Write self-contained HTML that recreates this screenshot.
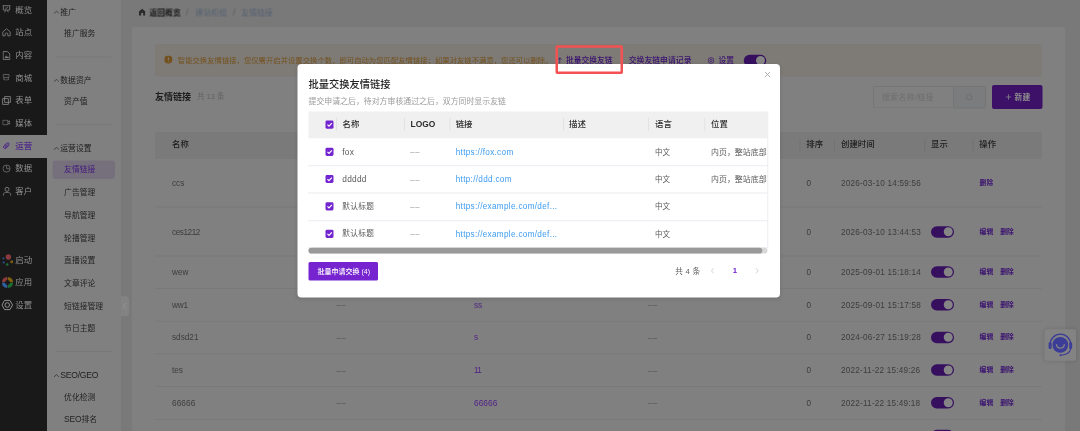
<!DOCTYPE html>
<html lang="zh-CN">
<head>
<meta charset="utf-8">
<title>友情链接</title>
<style>
*{box-sizing:border-box;margin:0;padding:0}
html,body{width:1080px;height:431px;overflow:hidden;background:#797979}
#stage{position:absolute;left:0;top:0;width:4320px;height:1724px;transform:scale(0.25) rotateX(0.0001deg);transform-origin:0 0}
body{position:relative;font-family:"Liberation Sans","Noto Sans CJK SC",sans-serif;font-size:32px;color:#333}
.abs{position:absolute}
.t{position:absolute;white-space:nowrap;line-height:48px;height:48px}
#nav1{position:absolute;left:0;top:0;width:188px;height:1724px;background:#191919}
#nav1 .on{position:absolute;left:0;top:540px;width:188px;height:92px;background:#808080}
#nav2{position:absolute;left:188px;top:0;width:296px;height:1724px;background:#808080}
.hr{position:absolute;left:221.6px;width:225.6px;height:4px;background:#77787b}
#card{position:absolute;left:527.2px;top:108px;width:3733.6px;height:1680px;background:#808080;border-radius:8px 8px 0 0}
#alert{position:absolute;left:620px;top:176px;width:3548px;height:130px;background:#7e7b76;border-radius:8px}
#thead{position:absolute;left:620px;top:528px;width:3548px;height:108px;background:#7a7a7b}
.sep{position:absolute;top:556px;width:4px;height:52px;background:#737373}
.row{position:absolute;left:620px;width:3548px;height:4px;background:#797979}
.sw{position:absolute;width:92px;height:46px;border-radius:24px;background:#36105f}
.sw i{position:absolute;right:4.8px;top:4.8px;width:36px;height:36px;border-radius:20px;background:#858585}
#modal{position:absolute;left:1189.6px;top:256px;width:1930.4px;height:933.6px;background:#fff;border-radius:16px;box-shadow:0 4px 16px rgba(0,0,0,.12)}
#mhead{position:absolute;left:1234px;top:446.4px;width:1838px;height:106.4px;background:#f0f0f0}
.msep{position:absolute;top:472px;width:4px;height:52px;background:#e2e2e2}
.mrow{position:absolute;left:1232px;width:1840px;height:4px;background:#ebebf2}
.cb{position:absolute;left:1301.6px;width:32.8px;height:32.8px;border-radius:5.6px;background:#7326d0}
.cb svg{position:absolute;left:0;top:0;width:32.8px;height:32.8px;display:block}
</style>
</head>
<body><div id="stage">

<div id="nav1"><div class="on"></div></div>
<div class="t" style="left:61.2px;top:15.2px;font-size:33.6px;color:#909090;font-weight:normal;">概览</div>
<div class="t" style="left:61.2px;top:105.6px;font-size:33.6px;color:#909090;font-weight:normal;">站点</div>
<div class="t" style="left:61.2px;top:196.4px;font-size:33.6px;color:#909090;font-weight:normal;">内容</div>
<div class="t" style="left:61.2px;top:287.2px;font-size:33.6px;color:#909090;font-weight:normal;">商城</div>
<div class="t" style="left:61.2px;top:378px;font-size:33.6px;color:#909090;font-weight:normal;">表单</div>
<div class="t" style="left:61.2px;top:468.8px;font-size:33.6px;color:#909090;font-weight:normal;">媒体</div>
<div class="t" style="left:61.2px;top:559.6px;font-size:33.6px;color:#4b258a;font-weight:500;">运营</div>
<div class="t" style="left:61.2px;top:650.4px;font-size:33.6px;color:#909090;font-weight:normal;">数据</div>
<div class="t" style="left:61.2px;top:741.2px;font-size:33.6px;color:#909090;font-weight:normal;">客户</div>
<div class="t" style="left:61.2px;top:1014.8px;font-size:33.6px;color:#909090;font-weight:normal;">启动</div>
<div class="t" style="left:61.2px;top:1106px;font-size:33.6px;color:#909090;font-weight:normal;">应用</div>
<div class="t" style="left:61.2px;top:1196.8px;font-size:33.6px;color:#909090;font-weight:normal;">设置</div>
<svg class="abs" style="left:8px;top:20px;width:36px;height:32px" viewBox="0 0 9 8" fill="none"><path d="M0.6 0.7H8.4M1.3 0.7V5H7.7V0.7M3.1 2.8L4 3.6L5.9 1.9M2.7 7.3L3.5 5.2M6.3 7.3L5.5 5.2" stroke="#808080" stroke-width="0.85"/></svg>
<svg class="abs" style="left:8px;top:112px;width:36px;height:36px" viewBox="0 0 9 9" fill="none"><path d="M0.8 3.9L4.5 0.8L8.2 3.9V7.8H5.8V5.4Q4.5 4.4 3.2 5.4V7.8H0.8Z" stroke="#808080" stroke-width="0.85" stroke-linejoin="round"/></svg>
<svg class="abs" style="left:10px;top:204px;width:32px;height:36px" viewBox="0 0 8 9" fill="none"><path d="M0.6 0.6H5L7.4 3V8.4H0.6Z" stroke="#808080" stroke-width="0.9"/><path d="M2 7L3.5 4.6L4.7 6L5.6 5.2L6.4 7Z" fill="#808080"/></svg>
<svg class="abs" style="left:10.4px;top:296px;width:28.8px;height:26.4px" viewBox="0 0 7.2 6.6" fill="none"><path d="M0.6 0.6H6.6V3.2Q5.6 4.2 4.6 3.3Q3.6 4.2 2.6 3.3Q1.6 4.2 0.6 3.2ZM1.4 3.8V6H5.8V3.8" stroke="#727272" stroke-width="0.8"/></svg>
<svg class="abs" style="left:8px;top:384px;width:36px;height:36px" viewBox="0 0 9 9" fill="none"><path d="M2.6 0.6H8.4V6.4H2.6ZM0.6 2.6H6.4V8.4H0.6Z" stroke="#808080" stroke-width="0.9"/></svg>
<svg class="abs" style="left:9.2px;top:478.4px;width:32px;height:24px" viewBox="0 0 8 6" fill="none"><path d="M0.6 0.7H5.6V5.3H0.6ZM5.6 2.3L7.4 1.4V4.6L5.6 3.7" stroke="#747474" stroke-width="0.8" stroke-linejoin="round"/></svg>
<svg class="abs" style="left:12px;top:569.2px;width:27.2px;height:27.2px" viewBox="0 0 7.4 7.6" fill="none"><path d="M6.6 3.4L3.6 6.4C2.8 7.2 1.6 7.2 0.9 6.5C0.2 5.8 0.3 4.7 1 4L4.4 0.9C5 0.4 5.9 0.4 6.4 0.9C6.9 1.5 6.9 2.3 6.4 2.8L3.3 5.7C3 6 2.5 6 2.2 5.7C1.9 5.4 2 5 2.2 4.7L4.9 2.2" stroke="#4b258a" stroke-width="1.1"/></svg>
<svg class="abs" style="left:8.8px;top:657.2px;width:34.4px;height:34.4px" viewBox="0 0 8.6 8.6" fill="none"><circle cx="4.3" cy="4.3" r="3.6" stroke="#727272" stroke-width="0.8"/><path d="M4.3 1V4.5H7.6" stroke="#727272" stroke-width="0.8"/></svg>
<svg class="abs" style="left:10px;top:746px;width:36px;height:40px" viewBox="0 0 9 10" fill="none"><circle cx="4.5" cy="2.8" r="2" stroke="#808080" stroke-width="0.9"/><path d="M0.8 9.2V8.2C0.8 6.6 2.2 5.8 4.5 5.8C6.8 5.8 8.2 6.6 8.2 8.2V9.2" stroke="#808080" stroke-width="0.9"/></svg>
<svg class="abs" style="left:4px;top:1012px;width:52px;height:56px" viewBox="0 0 13 14" fill="none"><circle cx="7.4" cy="4" r="2.7" fill="#8a3a3e"/><circle cx="10.7" cy="8.7" r="1.5" fill="#7a5a10"/><circle cx="6.2" cy="11.5" r="1.3" fill="#1f6e33"/><circle cx="2.4" cy="5.4" r="0.9" fill="#2a5b9a"/><circle cx="2.7" cy="9.5" r="1" fill="#2a5b9a"/></svg>
<svg class="abs" style="left:6px;top:1106px;width:48px;height:48px" viewBox="0 0 12 12" fill="none"><g transform="translate(6 6)"><path d="M-5.6 -0.3A5.6 5.6 0 0 1 -0.3 -5.6L-0.3 -2.5A2.5 2.5 0 0 0 -2.5 -0.3Z" fill="#8c3a3a"/><path d="M0.3 -5.6A5.6 5.6 0 0 1 5.6 -0.3L2.5 -0.3A2.5 2.5 0 0 0 0.3 -2.5Z" fill="#80600f"/><path d="M5.6 0.3A5.6 5.6 0 0 1 0.3 5.6L0.3 2.5A2.5 2.5 0 0 0 2.5 0.3Z" fill="#1e6b30"/><path d="M-0.3 5.6A5.6 5.6 0 0 1 -5.6 0.3L-2.5 0.3A2.5 2.5 0 0 0 -0.3 2.5Z" fill="#2b5fa0"/></g></svg>
<svg class="abs" style="left:5.2px;top:1196px;width:48px;height:48px" viewBox="0 0 12 12" fill="none"><path d="M0.7 6L3.3 1.4H8.7L11.3 6L8.7 10.6H3.3Z" stroke="#909090" stroke-width="1" stroke-linejoin="round"/><circle cx="6" cy="6" r="2.3" stroke="#909090" stroke-width="1"/></svg>
<div id="nav2"></div>
<svg class="abs" style="left:214.4px;top:40.8px;width:24px;height:16px" viewBox="0 0 6 4" fill="none"><path d="M0.6 3.2L3 0.8L5.4 3.2" stroke="#2e2e2e" stroke-width="0.75"/></svg>
<div class="t" style="left:241.2px;top:23.6px;font-size:31.2px;color:#202020;font-weight:normal;">推广</div>
<svg class="abs" style="left:214.4px;top:314px;width:24px;height:16px" viewBox="0 0 6 4" fill="none"><path d="M0.6 3.2L3 0.8L5.4 3.2" stroke="#2e2e2e" stroke-width="0.75"/></svg>
<div class="t" style="left:241.2px;top:296.8px;font-size:31.2px;color:#202020;font-weight:normal;">数据资产</div>
<svg class="abs" style="left:214.4px;top:586px;width:24px;height:16px" viewBox="0 0 6 4" fill="none"><path d="M0.6 3.2L3 0.8L5.4 3.2" stroke="#2e2e2e" stroke-width="0.75"/></svg>
<div class="t" style="left:241.2px;top:568.8px;font-size:31.2px;color:#202020;font-weight:normal;">运营设置</div>
<svg class="abs" style="left:214.4px;top:1494.8px;width:24px;height:16px" viewBox="0 0 6 4" fill="none"><path d="M0.6 3.2L3 0.8L5.4 3.2" stroke="#2e2e2e" stroke-width="0.75"/></svg>
<div class="t" style="left:241.2px;top:1473.6px;font-size:31.2px;color:#202020;font-weight:normal;"><span style="font-size:34.4px;letter-spacing:-1px">SEO/GEO</span></div>
<div class="abs" style="left:210px;top:642px;width:250px;height:74px;background:#76707d;border-radius:12px"></div>
<div class="t" style="left:256.4px;top:653.2px;font-size:31.2px;color:#43197c;font-weight:normal;">友情链接</div>
<div class="t" style="left:256.4px;top:109.2px;font-size:31.2px;color:#1f1f1f;font-weight:normal;">推广服务</div>
<div class="t" style="left:256.4px;top:382px;font-size:31.2px;color:#1f1f1f;font-weight:normal;">资产值</div>
<div class="t" style="left:256.4px;top:746.8px;font-size:31.2px;color:#1f1f1f;font-weight:normal;">广告管理</div>
<div class="t" style="left:256.4px;top:837.6px;font-size:31.2px;color:#1f1f1f;font-weight:normal;">导航管理</div>
<div class="t" style="left:256.4px;top:928.4px;font-size:31.2px;color:#1f1f1f;font-weight:normal;">轮播管理</div>
<div class="t" style="left:256.4px;top:1019.2px;font-size:31.2px;color:#1f1f1f;font-weight:normal;">直播设置</div>
<div class="t" style="left:256.4px;top:1110px;font-size:31.2px;color:#1f1f1f;font-weight:normal;">文章评论</div>
<div class="t" style="left:256.4px;top:1200.8px;font-size:31.2px;color:#1f1f1f;font-weight:normal;">短链接管理</div>
<div class="t" style="left:256.4px;top:1291.2px;font-size:31.2px;color:#1f1f1f;font-weight:normal;">节日主题</div>
<div class="t" style="left:256.4px;top:1565.2px;font-size:31.2px;color:#1f1f1f;font-weight:normal;">优化检测</div>
<div class="t" style="left:256.4px;top:1653.2px;font-size:31.2px;color:#1f1f1f;font-weight:normal;"><span style="font-size:34px;letter-spacing:-0.8px">SEO</span>排名</div>
<div class="hr" style="top:226px"></div>
<div class="hr" style="top:496px"></div>
<div class="hr" style="top:1404px"></div>
<div class="abs" style="left:484px;top:1185.2px;width:32px;height:78.4px;background:#838383;border-radius:0 12px 12px 0"></div>
<svg class="abs" style="left:490px;top:1210px;width:16px;height:28px" viewBox="0 0 4 7" fill="none"><path d="M3.2 0.6L0.8 3.5L3.2 6.4" stroke="#9c9c9c" stroke-width="0.7"/></svg>
<svg class="abs" style="left:554.8px;top:34.4px;width:27.2px;height:29.6px" viewBox="0 0 6.8 7.4" fill="none"><path d="M3.4 0.3L6.6 3.1V6.6Q6.6 7.1 6.1 7.1H4.4V4.6H2.4V7.1H0.7Q0.2 7.1 0.2 6.6V3.1Z" fill="#2b2b2b"/></svg>
<div class="t" style="left:598px;top:26px;font-size:31.2px;color:#1a1a1a;font-weight:bold;">返回概览</div>
<div class="t" style="left:743.2px;top:25.6px;font-size:38.4px;color:#5e5e5e;font-weight:normal;">/</div>
<div class="t" style="left:782.4px;top:26px;font-size:31.2px;color:#566272;font-weight:normal;">建站柜组</div>
<div class="t" style="left:931.2px;top:25.6px;font-size:38.4px;color:#5e5e5e;font-weight:normal;">/</div>
<div class="t" style="left:965.6px;top:26px;font-size:31.2px;color:#566272;font-weight:normal;">友情链接</div>
<div id="card"></div><div id="alert"></div>
<svg class="abs" style="left:656.8px;top:222.4px;width:32.8px;height:32.8px" viewBox="0 0 8.2 8.2" fill="none"><circle cx="4.1" cy="4.1" r="4.1" fill="#73511d"/><rect x="3.6" y="1.8" width="1" height="3" rx="0.4" fill="#86827c"/><rect x="3.6" y="5.5" width="1" height="1" rx="0.4" fill="#86827c"/></svg>
<div class="t" style="left:711.2px;top:218.8px;font-size:29.4px;color:#74511e;font-weight:normal;">智能交换友情链接，您仅需开启并设置交换个数，即可自动为您匹配友情链接；如果对友链不满意，您还可以删除。</div>
<svg class="abs" style="left:2228.8px;top:228px;width:20px;height:28px" viewBox="0 0 5 7" fill="none"><path d="M2.5 6.5V0.8M0.6 2.8L2.5 0.8L4.4 2.8" stroke="#3b1270" stroke-width="0.7"/></svg>
<div class="t" style="left:2264px;top:218px;font-size:31px;color:#3a1170;font-weight:500;">批量交换友链</div>
<div class="t" style="left:2514.8px;top:218px;font-size:31.4px;color:#3a1170;font-weight:500;">交换友链申请记录</div>
<svg class="abs" style="left:2830px;top:228px;width:28px;height:28px" viewBox="0 0 7 7" fill="none"><circle cx="3.5" cy="3.5" r="2.9" stroke="#3a1170" stroke-width="0.7"/><circle cx="3.5" cy="3.5" r="1.2" stroke="#3a1170" stroke-width="0.7"/></svg>
<div class="t" style="left:2874.4px;top:218px;font-size:31px;color:#3a1170;font-weight:500;">设置</div>
<div class="sw" style="left:2974.8px;top:219.2px;width:90.4px;height:46.4px"><i></i></div>
<div class="t" style="left:620px;top:362px;font-size:36px;color:#1c1c1c;font-weight:bold;">友情链接</div>
<div class="t" style="left:788px;top:361.6px;font-size:30px;color:#626262;font-weight:normal;">共 13 条</div>
<div class="abs" style="left:3492px;top:344px;width:324px;height:90px;border:4px solid #767676;border-right:none;border-radius:8px 0 0 8px"></div>
<div class="t" style="left:3528px;top:364.8px;font-size:31.2px;color:#6d6d6d;font-weight:normal;letter-spacing:1.8px;">搜索名称/链接</div>
<div class="abs" style="left:3812px;top:344px;width:132px;height:90px;border:4px solid #757575;background:#7b7c7d;border-radius:0 8px 8px 0"></div>
<svg class="abs" style="left:3862px;top:374px;width:32px;height:32px" viewBox="0 0 8 8" fill="none"><circle cx="3.6" cy="3.6" r="2.7" stroke="#6a6a6a" stroke-width="0.7"/><path d="M5.6 5.6L6.6 6.6" stroke="#6a6a6a" stroke-width="0.7"/></svg>
<div class="abs" style="left:3968px;top:340px;width:202px;height:96px;background:#3c1167;border-radius:8px"></div>
<svg class="abs" style="left:4022px;top:376px;width:24px;height:24px" viewBox="0 0 6 6" fill="none"><path d="M3 0.3V5.7M0.3 3H5.7" stroke="#8e8e8e" stroke-width="0.7"/></svg>
<div class="t" style="left:4058.4px;top:364.4px;font-size:31.2px;color:#8e8e8e;font-weight:bold;">新建</div>
<div id="thead"></div>
<div class="t" style="left:688px;top:553.2px;font-size:33.6px;color:#1d1d1d;font-weight:500;">名称</div>
<div class="t" style="left:3225.2px;top:553.2px;font-size:33.6px;color:#1d1d1d;font-weight:500;">排序</div>
<div class="t" style="left:3364px;top:553.2px;font-size:33.6px;color:#1d1d1d;font-weight:500;">创建时间</div>
<div class="t" style="left:3724px;top:553.2px;font-size:33.6px;color:#1d1d1d;font-weight:500;">显示</div>
<div class="t" style="left:3917.2px;top:553.2px;font-size:33.6px;color:#1d1d1d;font-weight:500;">操作</div>
<div class="sep" style="left:3198px"></div>
<div class="sep" style="left:3336px"></div>
<div class="sep" style="left:3697.2px"></div>
<div class="sep" style="left:3890px"></div>
<div class="row" style="top:826px"></div>
<div class="row" style="top:1022px"></div>
<div class="row" style="top:1152px"></div>
<div class="row" style="top:1282.8px"></div>
<div class="row" style="top:1413.2px"></div>
<div class="row" style="top:1544px"></div>
<div class="row" style="top:1676px"></div>
<div class="row" style="top:1804px"></div>
<div class="t" style="left:688px;top:708px;font-size:32.8px;color:#3c3c3c;font-weight:normal;letter-spacing:0px;">ccs</div>
<div class="t" style="left:1346px;top:706.8px;font-size:30.4px;color:#4a4a4a;font-weight:normal;letter-spacing:3.2px;">––</div>
<div class="t" style="left:2592px;top:706.8px;font-size:30.4px;color:#4a4a4a;font-weight:normal;letter-spacing:3.2px;">––</div>
<div class="t" style="left:3226.4px;top:708px;font-size:32.8px;color:#3c3c3c;font-weight:normal;">0</div>
<div class="t" style="left:3364px;top:708px;font-size:32.8px;color:#3c3c3c;font-weight:normal;letter-spacing:0.8px;">2026-03-10 14:59:56</div>
<div class="t" style="left:3918.4px;top:706.4px;font-size:27.2px;color:#3a1170;font-weight:bold;">删除</div>
<div class="t" style="left:688px;top:903.6px;font-size:32.8px;color:#3c3c3c;font-weight:normal;letter-spacing:-1.8px;">ces1212</div>
<div class="t" style="left:1346px;top:902.4px;font-size:30.4px;color:#4a4a4a;font-weight:normal;letter-spacing:3.2px;">––</div>
<div class="t" style="left:2592px;top:902.4px;font-size:30.4px;color:#4a4a4a;font-weight:normal;letter-spacing:3.2px;">––</div>
<div class="t" style="left:3226.4px;top:903.6px;font-size:32.8px;color:#3c3c3c;font-weight:normal;">0</div>
<div class="t" style="left:3364px;top:903.6px;font-size:32.8px;color:#3c3c3c;font-weight:normal;letter-spacing:0.8px;">2026-03-10 13:44:53</div>
<div class="sw" style="left:3724px;top:904.6px"><i></i></div>
<div class="t" style="left:3918.4px;top:902px;font-size:27.2px;color:#3a1170;font-weight:bold;">编辑</div>
<div class="t" style="left:4000.8px;top:902px;font-size:27.2px;color:#3a1170;font-weight:bold;">删除</div>
<div class="t" style="left:688px;top:1064px;font-size:32.8px;color:#3c3c3c;font-weight:normal;letter-spacing:0px;">wew</div>
<div class="t" style="left:1346px;top:1062.8px;font-size:30.4px;color:#4a4a4a;font-weight:normal;letter-spacing:3.2px;">––</div>
<div class="t" style="left:2592px;top:1062.8px;font-size:30.4px;color:#4a4a4a;font-weight:normal;letter-spacing:3.2px;">––</div>
<div class="t" style="left:3226.4px;top:1064px;font-size:32.8px;color:#3c3c3c;font-weight:normal;">0</div>
<div class="t" style="left:3364px;top:1064px;font-size:32.8px;color:#3c3c3c;font-weight:normal;letter-spacing:0.8px;">2025-09-01 15:18:14</div>
<div class="sw" style="left:3724px;top:1065px"><i></i></div>
<div class="t" style="left:3918.4px;top:1062.4px;font-size:27.2px;color:#3a1170;font-weight:bold;">编辑</div>
<div class="t" style="left:4000.8px;top:1062.4px;font-size:27.2px;color:#3a1170;font-weight:bold;">删除</div>
<div class="t" style="left:688px;top:1194.8px;font-size:32.8px;color:#3c3c3c;font-weight:normal;letter-spacing:-0.8px;">ww1</div>
<div class="t" style="left:1346px;top:1193.6px;font-size:30.4px;color:#4a4a4a;font-weight:normal;letter-spacing:3.2px;">––</div>
<div class="t" style="left:1896px;top:1194.8px;font-size:32.8px;color:#4f1f86;font-weight:normal;letter-spacing:0px;">ss</div>
<div class="t" style="left:2592px;top:1193.6px;font-size:30.4px;color:#4a4a4a;font-weight:normal;letter-spacing:3.2px;">––</div>
<div class="t" style="left:3226.4px;top:1194.8px;font-size:32.8px;color:#3c3c3c;font-weight:normal;">0</div>
<div class="t" style="left:3364px;top:1194.8px;font-size:32.8px;color:#3c3c3c;font-weight:normal;letter-spacing:0.8px;">2025-09-01 15:17:58</div>
<div class="sw" style="left:3724px;top:1195.8px"><i></i></div>
<div class="t" style="left:3918.4px;top:1193.2px;font-size:27.2px;color:#3a1170;font-weight:bold;">编辑</div>
<div class="t" style="left:4000.8px;top:1193.2px;font-size:27.2px;color:#3a1170;font-weight:bold;">删除</div>
<div class="t" style="left:688px;top:1325.6px;font-size:32.8px;color:#3c3c3c;font-weight:normal;letter-spacing:0px;">sdsd21</div>
<div class="t" style="left:1346px;top:1324.4px;font-size:30.4px;color:#4a4a4a;font-weight:normal;letter-spacing:3.2px;">––</div>
<div class="t" style="left:1896px;top:1325.6px;font-size:32.8px;color:#4f1f86;font-weight:normal;letter-spacing:0px;">s</div>
<div class="t" style="left:2592px;top:1324.4px;font-size:30.4px;color:#4a4a4a;font-weight:normal;letter-spacing:3.2px;">––</div>
<div class="t" style="left:3226.4px;top:1325.6px;font-size:32.8px;color:#3c3c3c;font-weight:normal;">0</div>
<div class="t" style="left:3364px;top:1325.6px;font-size:32.8px;color:#3c3c3c;font-weight:normal;letter-spacing:0.8px;">2024-06-27 15:19:28</div>
<div class="sw" style="left:3724px;top:1326.6px"><i></i></div>
<div class="t" style="left:3918.4px;top:1324px;font-size:27.2px;color:#3a1170;font-weight:bold;">编辑</div>
<div class="t" style="left:4000.8px;top:1324px;font-size:27.2px;color:#3a1170;font-weight:bold;">删除</div>
<div class="t" style="left:688px;top:1456.4px;font-size:32.8px;color:#3c3c3c;font-weight:normal;letter-spacing:0px;">tes</div>
<div class="t" style="left:1346px;top:1455.2px;font-size:30.4px;color:#4a4a4a;font-weight:normal;letter-spacing:3.2px;">––</div>
<div class="t" style="left:1896px;top:1456.4px;font-size:32.8px;color:#4f1f86;font-weight:normal;letter-spacing:-2.8px;">11</div>
<div class="t" style="left:2592px;top:1455.2px;font-size:30.4px;color:#4a4a4a;font-weight:normal;letter-spacing:3.2px;">––</div>
<div class="t" style="left:3226.4px;top:1456.4px;font-size:32.8px;color:#3c3c3c;font-weight:normal;">0</div>
<div class="t" style="left:3364px;top:1456.4px;font-size:32.8px;color:#3c3c3c;font-weight:normal;letter-spacing:0.8px;">2022-11-22 15:49:26</div>
<div class="sw" style="left:3724px;top:1457.4px"><i></i></div>
<div class="t" style="left:3918.4px;top:1454.8px;font-size:27.2px;color:#3a1170;font-weight:bold;">编辑</div>
<div class="t" style="left:4000.8px;top:1454.8px;font-size:27.2px;color:#3a1170;font-weight:bold;">删除</div>
<div class="t" style="left:688px;top:1587.2px;font-size:33.2px;color:#3c3c3c;font-weight:normal;letter-spacing:0.2px;">66666</div>
<div class="t" style="left:1346px;top:1586px;font-size:30.4px;color:#4a4a4a;font-weight:normal;letter-spacing:3.2px;">––</div>
<div class="t" style="left:1896px;top:1587.2px;font-size:33.2px;color:#4f1f86;font-weight:normal;letter-spacing:0.2px;">66666</div>
<div class="t" style="left:2592px;top:1586px;font-size:30.4px;color:#4a4a4a;font-weight:normal;letter-spacing:3.2px;">––</div>
<div class="t" style="left:3226.4px;top:1587.2px;font-size:32.8px;color:#3c3c3c;font-weight:normal;">0</div>
<div class="t" style="left:3364px;top:1587.2px;font-size:32.8px;color:#3c3c3c;font-weight:normal;letter-spacing:0.8px;">2022-11-22 15:49:18</div>
<div class="sw" style="left:3724px;top:1588.2px"><i></i></div>
<div class="t" style="left:3918.4px;top:1585.6px;font-size:27.2px;color:#3a1170;font-weight:bold;">编辑</div>
<div class="t" style="left:4000.8px;top:1585.6px;font-size:27.2px;color:#3a1170;font-weight:bold;">删除</div>
<div class="sw" style="left:3724px;top:1719.2px"><i></i></div>
<div class="abs" style="left:4177.6px;top:1316.8px;width:126.4px;height:126.4px;background:#838384;border-radius:10px;box-shadow:0 0 16px rgba(0,0,0,.14)"></div>
<svg class="abs" style="left:4177.6px;top:1316.8px;width:126.4px;height:126.4px" viewBox="0 0 31.6 31.6" fill="none"><circle cx="15.8" cy="15.6" r="7.9" fill="#3c3d96"/><path d="M5.6 15.2A10.3 10.3 0 0 1 26.2 15.2" stroke="#3c3d96" stroke-width="1.3"/><rect x="4.1" y="13" width="3" height="6.8" rx="1.3" fill="#3c3d96"/><rect x="24.7" y="13" width="3" height="6.8" rx="1.3" fill="#3c3d96"/><path d="M26.2 19.4C25.6 23.2 21.5 25.6 16.6 26" stroke="#3c3d96" stroke-width="1.1"/><circle cx="16" cy="26" r="1.1" fill="#3c3d96"/><path d="M12 15.4C12.6 20 19.2 20 19.8 15.4" stroke="#838384" stroke-width="1.35" stroke-linecap="round"/></svg>
<div id="modal"></div>
<div class="abs" style="left:2222.4px;top:180.8px;width:269.2px;height:115.6px;border:10px solid #f45252;border-radius:7.2px"></div>
<div class="t" style="left:1234.4px;top:312.8px;font-size:41px;color:#222;font-weight:500;">批量交换友情链接</div>
<div class="t" style="left:1234px;top:380px;font-size:31.6px;color:#9a9a9a;font-weight:normal;">提交申请之后，待对方审核通过之后，双方同时显示友链</div>
<svg class="abs" style="left:3056.4px;top:284.4px;width:28px;height:28px" viewBox="0 0 7 7" fill="none"><path d="M0.9 0.9L6.1 6.1M6.1 0.9L0.9 6.1" stroke="#9da1a8" stroke-width="0.85"/></svg>
<div id="mhead"></div>
<div class="cb" style="top:482px"><svg viewBox="0 0 8 8" fill="none"><path d="M1.9 4.1L3.4 5.6L6.2 2.5" stroke="#fff" stroke-width="1.1"/></svg></div>
<div class="t" style="left:1370.4px;top:474px;font-size:33.6px;color:#2c2c2c;font-weight:500;">名称</div>
<div class="t" style="left:1642.4px;top:474px;font-size:33.6px;color:#2c2c2c;font-weight:bold;">LOGO</div>
<div class="t" style="left:1822.8px;top:474px;font-size:33.6px;color:#2c2c2c;font-weight:500;">链接</div>
<div class="t" style="left:2276px;top:474px;font-size:33.6px;color:#2c2c2c;font-weight:500;">描述</div>
<div class="t" style="left:2620px;top:474px;font-size:33.6px;color:#2c2c2c;font-weight:500;">语言</div>
<div class="t" style="left:2844px;top:474px;font-size:33.6px;color:#2c2c2c;font-weight:500;">位置</div>
<div class="msep" style="left:1344px"></div>
<div class="msep" style="left:1616px"></div>
<div class="msep" style="left:1798px"></div>
<div class="msep" style="left:2252px"></div>
<div class="msep" style="left:2592px"></div>
<div class="msep" style="left:2817.2px"></div>
<div class="mrow" style="top:661.2px"></div>
<div class="mrow" style="top:770px"></div>
<div class="mrow" style="top:880.8px"></div>
<div class="mrow" style="top:989.2px"></div>
<div class="cb" style="top:590.8px"><svg viewBox="0 0 8 8" fill="none"><path d="M1.9 4.1L3.4 5.6L6.2 2.5" stroke="#fff" stroke-width="1.1"/></svg></div>
<div class="t" style="left:1369.2px;top:583.2px;font-size:33.2px;color:#5a5a5a;font-weight:normal;letter-spacing:1px;">fox</div>
<div class="t" style="left:1640.8px;top:582px;font-size:30.4px;color:#8a8a8a;font-weight:normal;letter-spacing:3.2px;">––</div>
<div class="t" style="left:1822.8px;top:582.8px;font-size:32.8px;color:#3d9cf0;font-weight:normal;letter-spacing:1.2px;">https://fox.com</div>
<div class="t" style="left:2620px;top:583.2px;font-size:30.4px;color:#5a5a5a;font-weight:normal;">中文</div>
<div class="t" style="left:2844px;top:585.2px;width:225.2px;overflow:hidden;font-size:31.8px;color:#5a5a5a">内页，整站底部</div>
<div class="cb" style="top:699.6px"><svg viewBox="0 0 8 8" fill="none"><path d="M1.9 4.1L3.4 5.6L6.2 2.5" stroke="#fff" stroke-width="1.1"/></svg></div>
<div class="t" style="left:1369.2px;top:692px;font-size:33.2px;color:#5a5a5a;font-weight:normal;letter-spacing:1px;">ddddd</div>
<div class="t" style="left:1640.8px;top:690.8px;font-size:30.4px;color:#8a8a8a;font-weight:normal;letter-spacing:3.2px;">––</div>
<div class="t" style="left:1822.8px;top:691.6px;font-size:32.8px;color:#3d9cf0;font-weight:normal;letter-spacing:1.2px;">http://ddd.com</div>
<div class="t" style="left:2620px;top:692px;font-size:30.4px;color:#5a5a5a;font-weight:normal;">中文</div>
<div class="t" style="left:2844px;top:694px;width:225.2px;overflow:hidden;font-size:31.8px;color:#5a5a5a">内页，整站底部</div>
<div class="cb" style="top:809.2px"><svg viewBox="0 0 8 8" fill="none"><path d="M1.9 4.1L3.4 5.6L6.2 2.5" stroke="#fff" stroke-width="1.1"/></svg></div>
<div class="t" style="left:1369.2px;top:801.6px;font-size:30.8px;color:#5a5a5a;font-weight:normal;letter-spacing:1px;">默认标题</div>
<div class="t" style="left:1640.8px;top:800.4px;font-size:30.4px;color:#8a8a8a;font-weight:normal;letter-spacing:3.2px;">––</div>
<div class="t" style="left:1822.8px;top:801.2px;font-size:32.8px;color:#3d9cf0;font-weight:normal;letter-spacing:1.2px;">https://example.com/def...</div>
<div class="t" style="left:2620px;top:801.6px;font-size:30.4px;color:#5a5a5a;font-weight:normal;">中文</div>
<div class="cb" style="top:918.8px"><svg viewBox="0 0 8 8" fill="none"><path d="M1.9 4.1L3.4 5.6L6.2 2.5" stroke="#fff" stroke-width="1.1"/></svg></div>
<div class="t" style="left:1369.2px;top:911.2px;font-size:30.8px;color:#5a5a5a;font-weight:normal;letter-spacing:1px;">默认标题</div>
<div class="t" style="left:1640.8px;top:910px;font-size:30.4px;color:#8a8a8a;font-weight:normal;letter-spacing:3.2px;">––</div>
<div class="t" style="left:1822.8px;top:910.8px;font-size:32.8px;color:#3d9cf0;font-weight:normal;letter-spacing:1.2px;">https://example.com/def...</div>
<div class="t" style="left:2620px;top:911.2px;font-size:30.4px;color:#5a5a5a;font-weight:normal;">中文</div>
<div class="abs" style="left:3069.2px;top:444px;width:4px;height:548px;background:#ededf3"></div>
<div class="abs" style="left:1234px;top:991.2px;width:1836px;height:22.4px;background:#d8d8d8;border-radius:11.2px"></div>
<div class="abs" style="left:1234px;top:991.2px;width:1814.8px;height:22.4px;background:#999;border-radius:11.2px"></div>
<div class="abs" style="left:1234px;top:1048px;width:277.6px;height:73.6px;background:#7524cf;border-radius:6px"></div>
<div class="t" style="left:1270px;top:1060.8px;font-size:28px;color:#fff;font-weight:500;">批量申请交换 (4)</div>
<div class="t" style="left:2700.8px;top:1059.2px;font-size:30.4px;color:#5e5e5e;font-weight:normal;letter-spacing:1.2px;">共 4 条</div>
<svg class="abs" style="left:2842px;top:1071.2px;width:16px;height:24px" viewBox="0 0 4 6" fill="none"><path d="M3 0.6L0.9 3L3 5.4" stroke="#bdbdbd" stroke-width="0.7"/></svg>
<div class="t" style="left:2931.2px;top:1059.2px;font-size:31.2px;color:#7222cc;font-weight:bold;">1</div>
<svg class="abs" style="left:3020px;top:1071.2px;width:16px;height:24px" viewBox="0 0 4 6" fill="none"><path d="M1 0.6L3.1 3L1 5.4" stroke="#bdbdbd" stroke-width="0.7"/></svg></div></body>
</html>
